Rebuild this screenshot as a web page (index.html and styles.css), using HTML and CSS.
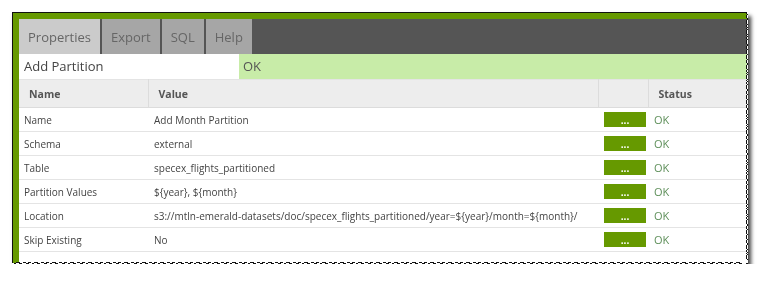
FILE: index.html
```html
<!DOCTYPE html>
<html>
  <head>
    <meta charset="utf-8">
    <link rel="stylesheet" href="styles.css">
  </head>
  <body>
    <div class="sheet">
      <div class="panel">
        <div class="frame">
          <nav class="tabs">
            <span class="tab active">Properties</span>
            <span class="tab">Export</span>
            <span class="tab">SQL</span>
            <span class="tab">Help</span>
          </nav>
          <div class="titlebar">
            <div class="titlebar__name">Add Partition</div>
            <div class="titlebar__state">OK</div>
          </div>
          <table class="props">
            <thead>
              <tr>
                <th class="col-name">Name</th>
                <th class="col-value">Value</th>
                <th class="col-edit"></th>
                <th class="col-status">Status</th>
              </tr>
            </thead>
            <tbody>
              <tr>
                <td>Name</td>
                <td>Add Month Partition</td>
                <td><button class="edit">...</button></td>
                <td class="ok">OK</td>
              </tr>
              <tr>
                <td>Schema</td>
                <td>external</td>
                <td><button class="edit">...</button></td>
                <td class="ok">OK</td>
              </tr>
              <tr>
                <td>Table</td>
                <td>specex_flights_partitioned</td>
                <td><button class="edit">...</button></td>
                <td class="ok">OK</td>
              </tr>
              <tr>
                <td>Partition Values</td>
                <td>${year}, ${month}</td>
                <td><button class="edit">...</button></td>
                <td class="ok">OK</td>
              </tr>
              <tr>
                <td>Location</td>
                <td>s3://mtln-emerald-datasets/doc/specex_flights_partitioned/year=${year}/month=${month}/</td>
                <td><button class="edit">...</button></td>
                <td class="ok">OK</td>
              </tr>
              <tr>
                <td>Skip Existing</td>
                <td>No</td>
                <td><button class="edit">...</button></td>
                <td class="ok">OK</td>
              </tr>
            </tbody>
          </table>
        </div>
      </div>
    </div>
  </body>
</html>
```

FILE: styles.css
```css
* {
  box-sizing: border-box;
}
body {
  margin: 0;
  background: #fff;
  font-family: "Open Sans", "Noto Sans", Arial, sans-serif;
}

/* screenshot frame: torn right/bottom edge with dark outline and shadow */
.sheet {
  width: 736px;
  margin: 12px 0 0 12px;
  box-shadow: 3px 4px 4px rgba(0, 0, 0, 0.75);
}
.panel {
  background: #111;
  padding: 1px 0 0 1px;
  -webkit-mask:
    linear-gradient(#000 0 0) left top / calc(100% - 3px) calc(100% - 3px) no-repeat,
    conic-gradient(from 210deg at right, #000 120deg, #0000 0) right top / 3px 5px repeat-y,
    conic-gradient(from 225deg at right, #000 90deg, #0000 0) right top 2px / 4px 9px repeat-y,
    conic-gradient(from -60deg at bottom, #000 120deg, #0000 0) left bottom / 6px 3px repeat-x,
    conic-gradient(from -45deg at bottom, #000 90deg, #0000 0) left 3px bottom / 9px 4px repeat-x;
  mask:
    linear-gradient(#000 0 0) left top / calc(100% - 3px) calc(100% - 3px) no-repeat,
    conic-gradient(from 210deg at right, #000 120deg, #0000 0) right top / 3px 5px repeat-y,
    conic-gradient(from 225deg at right, #000 90deg, #0000 0) right top 2px / 4px 9px repeat-y,
    conic-gradient(from -60deg at bottom, #000 120deg, #0000 0) left bottom / 6px 3px repeat-x,
    conic-gradient(from -45deg at bottom, #000 90deg, #0000 0) left 3px bottom / 9px 4px repeat-x;
}
/* same tear, pulled in by 1px so the panel's dark fill shows as an outline */
.frame {
  background: #fff;
  border-top: 6px solid #669900;
  border-left: 6px solid #669900;
  padding-bottom: 12px;
  -webkit-mask:
    linear-gradient(#000 0 0) left top / calc(100% - 4px) calc(100% - 4px) no-repeat,
    conic-gradient(from 210deg at right, #000 120deg, #0000 0) right 1px top -1px / 3px 5px repeat-y,
    conic-gradient(from 225deg at right, #000 90deg, #0000 0) right 1px top 1px / 4px 9px repeat-y,
    conic-gradient(from -60deg at bottom, #000 120deg, #0000 0) left -7px bottom 1px / 6px 3px repeat-x,
    conic-gradient(from -45deg at bottom, #000 90deg, #0000 0) left -4px bottom 1px / 9px 4px repeat-x;
  mask:
    linear-gradient(#000 0 0) left top / calc(100% - 4px) calc(100% - 4px) no-repeat,
    conic-gradient(from 210deg at right, #000 120deg, #0000 0) right 1px top -1px / 3px 5px repeat-y,
    conic-gradient(from 225deg at right, #000 90deg, #0000 0) right 1px top 1px / 4px 9px repeat-y,
    conic-gradient(from -60deg at bottom, #000 120deg, #0000 0) left -7px bottom 1px / 6px 3px repeat-x,
    conic-gradient(from -45deg at bottom, #000 90deg, #0000 0) left -4px bottom 1px / 9px 4px repeat-x;
}

.tabs {
  display: flex;
  height: 35px;
  background: #555;
}
.tab {
  display: flex;
  align-items: center;
  padding: 0 9px;
  margin-right: 2px;
  background: #a6a6a6;
  color: #666;
  font-size: 13px;
}
.tab.active {
  background: #cbcbcb;
}

.titlebar {
  display: flex;
  height: 25px;
  font-size: 13px;
  line-height: 25px;
}
.titlebar__name {
  width: 220px;
  padding-left: 5px;
  background: #fff;
  color: #444;
}
.titlebar__state {
  flex-grow: 1;
  padding-left: 4px;
  background: #c8eca8;
  color: #555;
}

.props {
  width: 100%;
  table-layout: fixed;
  border-collapse: collapse;
  font-size: 10px;
  color: #444;
}
.props th {
  height: 28px;
  background: #ededed;
  border-top: 1px solid #e4e4e4;
  border-bottom: 1px solid #dcdcdc;
  border-right: 1px solid #dcdcdc;
  text-align: left;
  font-size: 10.5px;
  font-weight: bold;
  color: #555;
  padding: 0 10px;
}
.props th:last-child {
  border-right: none;
}
.col-name {
  width: 129px;
}
.col-value {
  width: 450px;
}
.col-edit {
  width: 50px;
}
.props td {
  height: 24px;
  padding: 0 5px;
  border-bottom: 1px solid #e4e4e4;
  white-space: nowrap;
  overflow: hidden;
}
.props td:nth-child(2) {
  padding-left: 6px;
}
.edit {
  display: block;
  width: 42px;
  height: 15px;
  margin-left: 1px;
  border: none;
  padding: 0;
  background: #669900;
  color: #fff;
  font-family: inherit;
  font-size: 10px;
  font-weight: bold;
  line-height: 17px;
}
.props td.ok {
  color: #5e8f5a;
  font-size: 11px;
  padding-left: 6px;
}
```
